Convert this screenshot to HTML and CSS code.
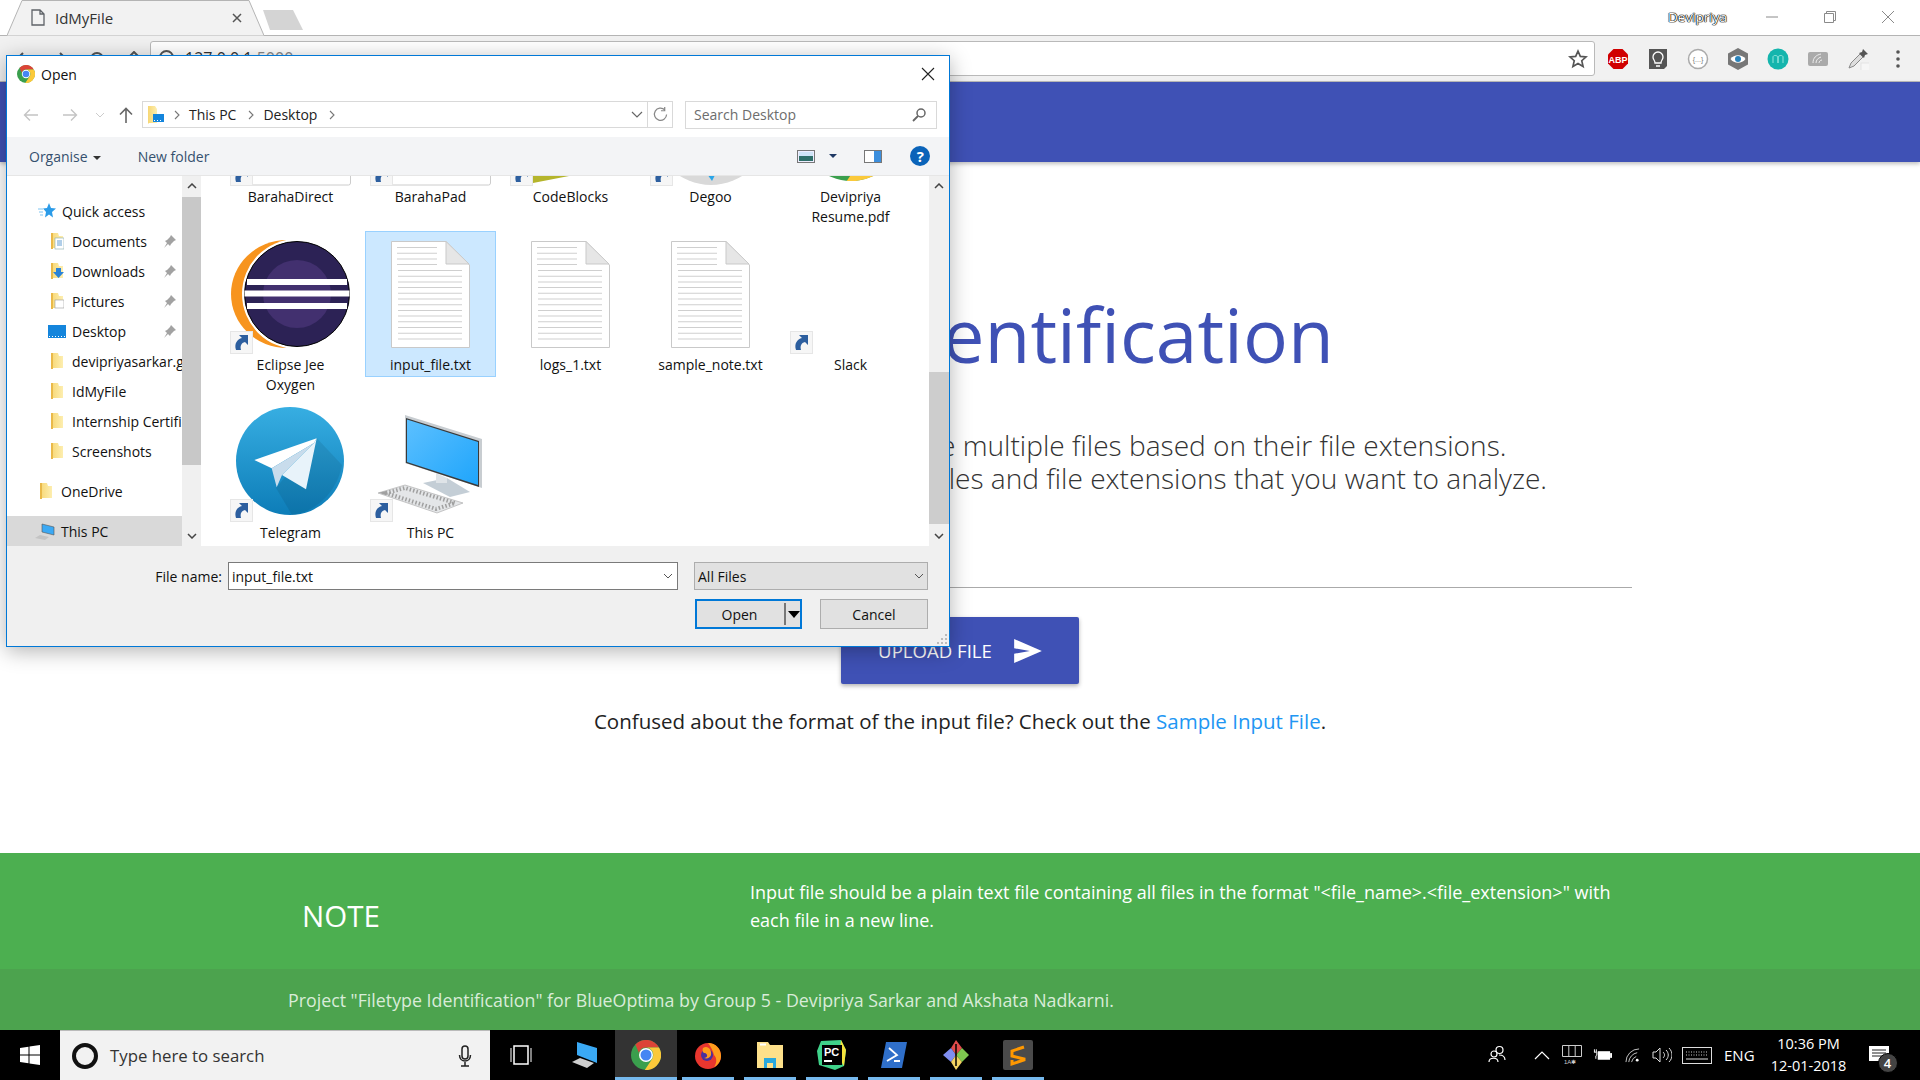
FILE: index.html
```html
<!DOCTYPE html>
<html lang="en">
<head>
<meta charset="utf-8">
<title>IdMyFile</title>
<link rel="stylesheet" href="styles.css">
</head>
<body>
<svg class="sprite" aria-hidden="true">
  <defs>
    <linearGradient id="tg" x1="0" y1="0" x2="0" y2="1"><stop offset="0" stop-color="#37aee2"/><stop offset="1" stop-color="#0d7db8"/></linearGradient>
    <linearGradient id="scr" x1="0" y1="0" x2="1" y2="1"><stop offset="0" stop-color="#5cc0ff"/><stop offset="1" stop-color="#1fa5fb"/></linearGradient>
    <linearGradient id="fold" x1="0" y1="0" x2="1" y2="0"><stop offset="0" stop-color="#f7d774"/><stop offset="1" stop-color="#fdeeb0"/></linearGradient>
    <symbol id="chrome" viewBox="0 0 24 24">
      <circle cx="12" cy="12" r="12" fill="#3a9f4d"/>
      <path d="M3.500 3.500A12 12 0 0 1 22.400 6H12A6 6 0 0 0 6.300 10.200Z" fill="#dc4437"/>
      <path d="M22.400 6A12 12 0 0 1 11 24L17 15A6 6 0 0 0 12 6Z" fill="#fbc93a"/>
      <circle cx="12" cy="12" r="5.600" fill="#fff"/><circle cx="12" cy="12" r="4.400" fill="#4586f3"/>
    </symbol>
    <symbol id="folder" viewBox="0 0 14 18">
      <path d="M1 1h7l1 3h4v12H3L1 17Z" fill="url(#fold)"/><path d="M1 1h2v16H1Z" fill="#e9b94a"/>
    </symbol>
    <symbol id="pin" viewBox="0 0 14 14">
      <path d="M8 1l5 5-2 1-3 3-1 2-2-2-4 4 3-5-2-2 2-1 3-3Z" fill="#a2a2a2"/>
    </symbol>
    <symbol id="shortcut" viewBox="0 0 23 23">
      <rect x=".5" y=".5" width="22" height="22" fill="#f6f6f6" stroke="#e6e6e6"/>
      <path d="M18 4v10l-3-3c-4 1-5 4-4 8H6C4 13 7 8 12 7L9 4Z" fill="#2d5f9f"/>
    </symbol>
    <symbol id="doc" viewBox="0 0 120 120">
      <path d="M20.500 6.500H75L98.500 30V112.500H20.500Z" fill="#fff" stroke="#c9c9c9"/>
      <path d="M75 6.500V29H98Z" fill="#e6e6e6" stroke="#c9c9c9"/>
      <line x1="46" y1="12" x2="46" y2="30" stroke="#cfcfcf" stroke-width="40" stroke-dasharray="1 4.700"/>
      <line x1="59" y1="35" x2="59" y2="108" stroke="#cfcfcf" stroke-width="64" stroke-dasharray="1 4.700"/>
    </symbol>
    <symbol id="backarrow" viewBox="0 0 16 14">
      <path d="M15 7H2M7 1.500 1.500 7 7 12.500" fill="none" stroke="currentColor" stroke-width="1.400"/>
    </symbol>
  </defs>
</svg>

<header class="tabstrip">
  <div class="tab">
    <svg class="tab-shape" viewBox="0 0 257 36" aria-hidden="true"><path d="M0 35.500 15 .5H242L257 35.500" fill="#f2f2f2" stroke="#b4b4b4"/></svg>
    <svg class="tab-fav" viewBox="0 0 14 17" aria-hidden="true"><path d="M1 1h8l4 4v11H1ZM9 1v4h4" fill="none" stroke="#5f6368" stroke-width="1.300"/></svg>
    <span class="tab-title">IdMyFile</span>
    <svg class="tab-close" viewBox="0 0 10 10" aria-hidden="true"><path d="M1 1l8 8M9 1 1 9" stroke="#555" stroke-width="1.500"/></svg>
  </div>
  <svg class="newtab" viewBox="0 0 42 22" aria-hidden="true"><path d="M1 1H31L41 21H8Z" fill="#d4d4d4"/></svg>
  <div class="profile">Devipriya</div>
  <div class="winctl">
    <svg viewBox="0 0 14 14" aria-hidden="true"><path d="M1 7h12" stroke="#8a8a8a"/></svg>
    <svg viewBox="0 0 14 14" aria-hidden="true"><path d="M3.500 3V1.500h9v9H11M1.500 3.500h9v9h-9Z" fill="none" stroke="#8a8a8a"/></svg>
    <svg viewBox="0 0 14 14" aria-hidden="true"><path d="M1 1l12 12M13 1 1 13" stroke="#8a8a8a"/></svg>
  </div>
</header>

<div class="toolbar">
  <div class="navbtns">
    <svg viewBox="0 0 16 16" aria-hidden="true"><path d="M15 8H2M8 2 2 8l6 6" fill="none" stroke="#555" stroke-width="2"/></svg>
    <svg viewBox="0 0 16 16" aria-hidden="true"><path d="M1 8h13M8 2l6 6-6 6" fill="none" stroke="#555" stroke-width="2"/></svg>
    <svg viewBox="0 0 16 16" aria-hidden="true"><circle cx="8" cy="8" r="6" fill="none" stroke="#555" stroke-width="2"/></svg>
    <svg viewBox="0 0 16 16" aria-hidden="true"><path d="M1 8l7-7 7 7" fill="none" stroke="#555" stroke-width="2"/></svg>
  </div>
  <div class="omnibox">
    <span class="url"><span class="url-ic"></span>127.0.0.1<span class="url-port">:5000</span></span>
    <svg class="star" viewBox="0 0 24 24" aria-hidden="true"><path d="M12 2.500l2.800 6.400 6.900.6-5.200 4.600 1.600 6.800-6.100-3.600-6.100 3.600 1.600-6.800L2.300 9.500l6.900-.6Z" fill="none" stroke="#555" stroke-width="2"/></svg>
  </div>
  <div class="exts">
    <svg viewBox="0 0 22 22" aria-hidden="true"><path d="M6.500 1h9L21 6.500v9L15.500 21h-9L1 15.500v-9Z" fill="#d00000"/><text x="11" y="14.500" class="abp">ABP</text></svg>
    <svg viewBox="0 0 22 22" aria-hidden="true"><path d="M2 1h18v17l-3 3H2Z" fill="#555"/><path d="M8 15c0-3-2-3-2-6a5 5 0 0 1 10 0c0 3-2 3-2 6ZM9 18h4" fill="none" stroke="#fff" stroke-width="1.300"/></svg>
    <svg viewBox="0 0 22 22" aria-hidden="true"><circle cx="11" cy="11" r="9.500" fill="#fff" stroke="#aaa" stroke-width="1.500"/><text x="11" y="14" class="dots">{...}</text></svg>
    <svg viewBox="0 0 22 22" aria-hidden="true"><path d="M11 0 21 5.500v11L11 22 1 16.500v-11Z" fill="#777"/><path d="M3.500 11C7 6 15 6 18.500 11 15 16 7 16 3.500 11Z" fill="#fff"/><circle cx="11" cy="11" r="3" fill="#2a83bb"/></svg>
    <svg viewBox="0 0 22 22" aria-hidden="true"><circle cx="11" cy="11" r="10.500" fill="#14b5ad"/><path d="M6 15V9c0-2 4-2 5 0v6-6c1-2 5-2 5 0v6" fill="none" stroke="#8fe5dc"/></svg>
    <svg viewBox="0 0 22 22" aria-hidden="true"><rect x="1" y="4" width="20" height="14" rx="2" fill="#aaa"/><path d="M6 15c0-5 3-8 8-9M9 15c0-3 2-5 5-6M12 15c0-1 1-3 3-3" fill="none" stroke="#eee"/></svg>
    <svg viewBox="0 0 22 22" aria-hidden="true"><path d="M2 20l2-5 9-9 3 3-9 9Z" fill="#ddd" stroke="#888"/><path d="M12 5l3-1 1-3 5 5-3 1-1 3Z" fill="#555"/><rect x="14" y="15" width="12" height="12" fill="#f6f6f6" stroke="#e4e4e4"/></svg>
    <svg class="ext-menu" viewBox="0 0 4 18" aria-hidden="true"><circle cx="2" cy="2" r="1.800" fill="#555"/><circle cx="2" cy="9" r="1.800" fill="#555"/><circle cx="2" cy="16" r="1.800" fill="#555"/></svg>
  </div>
</div>

<main class="page">
  <div class="appbar"></div>
  <section class="hero">
    <h1 class="title">Filetype Identification</h1>
    <p class="lead">Upload one text file of filenames to analyze multiple files based on their file extensions.<br>Provide an input file listing out the names of files and file extensions that you want to analyze.</p>
    <hr class="rule">
    <button class="upload" type="button">UPLOAD FILE
      <svg viewBox="0 0 30 26" aria-hidden="true"><path d="M0 0 30 13 0 26V16L17 13 0 10Z" fill="#fff"/></svg>
    </button>
    <p class="help">Confused about the format of the input file? Check out the <a class="link" href="#">Sample Input File</a>.</p>
  </section>
  <section class="note">
    <h2 class="note-h">NOTE</h2>
    <p class="note-t">Input file should be a plain text file containing all files in the format "&lt;file_name&gt;.&lt;file_extension&gt;" with each file in a new line.</p>
  </section>
  <footer class="foot">Project "Filetype Identification" for BlueOptima by Group 5 - Devipriya Sarkar and Akshata Nadkarni.</footer>
</main>

<nav class="taskbar">
  <div class="start"><svg viewBox="0 0 20 20" aria-hidden="true"><path d="M0 3l8.500-1.200V9.500H0ZM9.500 1.600 20 0v9.500H9.500ZM0 10.500h8.500v7.700L0 17ZM9.500 10.500H20V20L9.500 18.400Z" fill="#fff"/></svg></div>
  <div class="search">
    <span class="cortana"></span>
    <span class="search-t">Type here to search</span>
    <svg class="mic" viewBox="0 0 14 22" aria-hidden="true"><rect x="4" y="1" width="6" height="13" rx="3" fill="none" stroke="#222" stroke-width="1.500"/><path d="M1.500 10c0 8 11 8 11 0M7 17v4M3 21h8" fill="none" stroke="#222" stroke-width="1.500"/></svg>
  </div>
  <div class="apps">
    <div class="app"><svg viewBox="1 0 30 30" aria-hidden="true"><rect x="8" y="6" width="14" height="18" fill="none" stroke="#fff" stroke-width="1.500"/><path d="M5 8v14M25 8v14" stroke="#fff"/></svg></div>
    <div class="app"><svg viewBox="0 0 30 30" aria-hidden="true"><path d="M8 2 28 8v15L8 15Z" fill="#3aa9f4"/><path d="M3 22l8-4 14 5-7 5Z" fill="#cfcfcf"/></svg></div>
    <div class="app active on"><svg viewBox="0 0 24 24" aria-hidden="true"><use href="#chrome"/></svg></div>
    <div class="app on"><svg viewBox="0 0 30 30" aria-hidden="true"><circle cx="15" cy="16" r="13" fill="#e8362e"/><path d="M15 3c8 0 13 6 13 13 0 5-3 9-7 11 3-4 3-9 0-12-1-4-3-8-6-12Z" fill="#ff9d1c"/><circle cx="14" cy="15" r="6" fill="#4a2f9c"/><path d="M10 8c5-3 9 2 8 7-1 3-4 4-7 3 4 0 4-4 1-5-2 0-3-2-2-5Z" fill="#ff9d1c"/></svg></div>
    <div class="app on"><svg viewBox="0 0 30 30" aria-hidden="true"><path d="M2 2h11l2 3h13v23H2Z" fill="#fde08a"/><rect x="5" y="3.500" width="6" height="2" fill="#fff"/><path d="M9 18h12v10h-3v-5h-6v5H9Z" fill="#29a8dd"/></svg></div>
    <div class="app on"><svg viewBox="0 0 30 30" aria-hidden="true"><path d="M4 1 24 0l5 10-2 16-9 4L2 25 0 11Z" fill="#3fd28a"/><path d="M24 0l5 10-2 16-5-8Z" fill="#f6e23b"/><rect x="5" y="5" width="20" height="20" fill="#000"/><text x="7" y="16" class="pc">PC</text><rect x="7" y="20" width="8" height="2" fill="#fff"/></svg></div>
    <div class="app on"><svg viewBox="0 0 30 30" aria-hidden="true"><path d="M7 2h21l-5 26H2Z" fill="#2f6fc9"/><path d="M10 8l8 7-10 6M15 21h6" fill="none" stroke="#fff" stroke-width="1.800"/></svg></div>
    <div class="app on"><svg viewBox="0 0 30 30" aria-hidden="true"><path d="M15 0l6 8-6 7-5-7Z" fill="#e24b4b"/><path d="M2 15l8-7 5 7-5 7Z" fill="#7f8ef0"/><path d="M28 15l-7-7-6 7 6 7Z" fill="#7ec850"/><path d="M15 30l-5-8 5-7 6 7Z" fill="#f3d362"/><path d="M15 4v22" stroke="#000" stroke-width="1.500"/></svg></div>
    <div class="app on"><svg viewBox="0 0 30 30" aria-hidden="true"><rect width="30" height="30" rx="2" fill="#4a4a4a"/><path d="M21 7 9 11v5l12 3v1L9 24v-4" fill="none" stroke="#ff9800" stroke-width="3"/></svg></div>
  </div>
  <div class="tray">
    <svg class="t-people" viewBox="0 0 18 20" aria-hidden="true"><circle cx="11.500" cy="5" r="3.500" fill="none" stroke="#fff" stroke-width="1.200"/><circle cx="6" cy="9" r="3" fill="none" stroke="#fff" stroke-width="1.200"/><path d="M1 17c0-5 9-5 9 0M11 10c3 0 6 1 6 5" fill="none" stroke="#fff" stroke-width="1.200"/></svg>
    <svg class="t-chev" viewBox="0 0 16 9" aria-hidden="true"><path d="M1 8l7-7 7 7" fill="none" stroke="#fff" stroke-width="1.200"/></svg>
    <svg class="t-lay" viewBox="0 0 20 20" aria-hidden="true"><path d="M.5.500h19v11H.5ZM6.800.500v11M13.200.500v11" fill="none" stroke="#ccc"/><text x="2" y="19" class="lay">1A✱</text></svg>
    <svg class="t-batt" viewBox="0 0 20 14" aria-hidden="true"><rect x="5" y="3" width="13" height="9" fill="#fff"/><rect x="18" y="5" width="2" height="5" fill="#fff"/><path d="M1.500 1v3M3.500 1v3M1 4h3v2c0 2-1 2-1 2v3" fill="none" stroke="#fff"/></svg>
    <svg class="t-wifi" viewBox="0 0 16 16" aria-hidden="true"><circle cx="13" cy="13" r="1.500" fill="#fff"/><path d="M1 15A14 14 0 0 1 15 1M4 15A11 11 0 0 1 13 5M7 15a8 8 0 0 1 5-6" fill="none" stroke="#ccc"/></svg>
    <svg class="t-vol" viewBox="0 0 20 16" aria-hidden="true"><path d="M1 5h3l4-4v14l-4-4H1ZM11 5c2 2 2 4 0 6M14 3c3 3 3 7 0 10M17 1c4 4 4 10 0 14" fill="none" stroke="#ddd"/></svg>
    <svg class="t-kb" viewBox="0 0 30 17" aria-hidden="true"><rect x=".5" y=".5" width="29" height="16" fill="none" stroke="#ddd"/><path d="M4 5h22M4 8h22" stroke="#ccc" stroke-dasharray="1 1.500"/><path d="M4 12h22" stroke="#ddd"/></svg>
    <span class="t-eng">ENG</span>
    <div class="t-clock"><span>10:36 PM</span><span>12-01-2018</span></div>
    <div class="t-notif">
      <svg viewBox="0 0 20 18" aria-hidden="true"><path d="M0 0h20v15H0Z" fill="#fff"/><path d="M3 4h14M3 7h14M3 10h14" stroke="#222"/></svg>
      <span class="badge">4</span>
    </div>
  </div>
</nav>

<div class="dialog">
  <div class="d-title">
    <svg class="d-chrome" aria-hidden="true"><use href="#chrome"/></svg>
    <span>Open</span>
    <svg class="d-x" viewBox="0 0 14 14" aria-hidden="true"><path d="M1 1l12 12M13 1 1 13" stroke="#222" stroke-width="1.100"/></svg>
  </div>
  <div class="d-nav">
    <svg class="nv nv1" viewBox="0 0 16 14" aria-hidden="true"><use href="#backarrow"/></svg>
    <svg class="nv nv2" viewBox="0 0 16 14" aria-hidden="true"><g transform="matrix(-1 0 0 1 16 0)"><use href="#backarrow"/></g></svg>
    <svg class="nv3" viewBox="0 0 10 6" aria-hidden="true"><path d="M1 1l4 4 4-4" fill="none" stroke="#ccc"/></svg>
    <svg class="nv4" viewBox="0 0 14 16" aria-hidden="true"><path d="M7 16V2M1 7.500 7 1.500l6 6" fill="none" stroke="#666" stroke-width="1.600"/></svg>
    <div class="addr">
      <svg class="addr-ic" viewBox="0 0 16 18" aria-hidden="true"><path d="M0 0h7l2 3v14H1L0 18Z" fill="url(#fold)"/><rect x="5" y="8" width="11" height="8" fill="#1485dc"/><path d="M6 14.500h9" stroke="#fff" stroke-dasharray="1 2"/></svg>
      <svg class="crumb" viewBox="0 0 6 10" aria-hidden="true"><path d="M1 1l4 4-4 4" fill="none" stroke="#777" stroke-width="1.100"/></svg>
      <span class="crumb-t">This PC</span>
      <svg class="crumb crumb2" viewBox="0 0 6 10" aria-hidden="true"><path d="M1 1l4 4-4 4" fill="none" stroke="#777" stroke-width="1.100"/></svg>
      <span class="crumb-t">Desktop</span>
      <svg class="crumb crumb2" viewBox="0 0 6 10" aria-hidden="true"><path d="M1 1l4 4-4 4" fill="none" stroke="#777" stroke-width="1.100"/></svg>
      <svg class="addr-drop" viewBox="0 0 12 7" aria-hidden="true"><path d="M1 1l5 5 5-5" fill="none" stroke="#666" stroke-width="1.200"/></svg>
      <span class="addr-ref"><svg viewBox="0 0 16 16" aria-hidden="true"><path d="M12.500 3A6.500 6.500 0 1 0 14.500 8M12.500 0v4h-4" fill="none" stroke="#888" stroke-width="1.300"/></svg></span>
    </div>
    <div class="dsearch">
      <span>Search Desktop</span>
      <svg viewBox="0 0 14 14" aria-hidden="true"><circle cx="9" cy="5" r="4" fill="none" stroke="#666" stroke-width="1.500"/><path d="M6 8l-5 5" stroke="#666" stroke-width="1.800"/></svg>
    </div>
  </div>
  <div class="d-tools">
    <span class="tool">Organise<i class="caret"></i></span>
    <span class="tool tool2">New folder</span>
    <svg class="view-ic" viewBox="0 0 18 13" aria-hidden="true"><rect x=".5" y=".5" width="17" height="12" fill="#eef" stroke="#777"/><rect x="2" y="2" width="14" height="4" fill="#cfe4f7"/><rect x="2" y="6" width="14" height="5" fill="#2f6f6a"/></svg>
    <i class="caret caret-d"></i>
    <svg class="pane-ic" viewBox="0 0 18 13" aria-hidden="true"><rect x=".5" y=".5" width="17" height="12" fill="#fff" stroke="#777"/><rect x="10" y="1" width="7" height="11" fill="#3d8fdd"/></svg>
    <span class="help-ic">?</span>
  </div>
  <div class="d-body">
    <div class="side">
      <ul class="tree">
        <li class="node n1"><svg class="n-ic star-ic" viewBox="0 0 18 18" aria-hidden="true"><path d="M11 1l2 5 5 .5-4 3.500 1 5.500-4-3-4 3 1-5.500-3-3.500 4-.5Z" fill="#2b9be8"/><path d="M0 7h5M1 10h4M2 13h3" stroke="#7cc4f2"/></svg><span>Quick access</span></li>
        <li class="node n2"><svg class="n-ic" viewBox="0 0 14 18" aria-hidden="true"><use href="#folder"/><rect x="5" y="6" width="9" height="11" fill="#fff" stroke="#8aa" stroke-width=".6"/><path d="M7 9h5M7 11h5M7 13h5" stroke="#3a86c8" stroke-width=".8"/></svg><span>Documents</span><svg class="pin" aria-hidden="true"><use href="#pin"/></svg></li>
        <li class="node n2"><svg class="n-ic" viewBox="0 0 14 18" aria-hidden="true"><use href="#folder"/><path d="M6 6h5v4h3l-5.500 6L3 10h3Z" fill="#2b83d8"/></svg><span>Downloads</span><svg class="pin" aria-hidden="true"><use href="#pin"/></svg></li>
        <li class="node n2"><svg class="n-ic" viewBox="0 0 14 18" aria-hidden="true"><use href="#folder"/><rect x="5" y="8" width="9" height="8" fill="#fff" stroke="#999" stroke-width=".6"/></svg><span>Pictures</span><svg class="pin" aria-hidden="true"><use href="#pin"/></svg></li>
        <li class="node n2"><svg class="n-ic desk-ic" viewBox="0 0 18 13" aria-hidden="true"><rect width="18" height="13" fill="#1485dc"/><path d="M1 11.500h16" stroke="#fff" stroke-dasharray="1 2"/></svg><span>Desktop</span><svg class="pin" aria-hidden="true"><use href="#pin"/></svg></li>
        <li class="node n2"><svg class="n-ic" viewBox="0 0 14 18" aria-hidden="true"><use href="#folder"/></svg><span>devipriyasarkar.github.io</span></li>
        <li class="node n2"><svg class="n-ic" viewBox="0 0 14 18" aria-hidden="true"><use href="#folder"/></svg><span>IdMyFile</span></li>
        <li class="node n2"><svg class="n-ic" viewBox="0 0 14 18" aria-hidden="true"><use href="#folder"/></svg><span>Internship Certificates</span></li>
        <li class="node n2"><svg class="n-ic" viewBox="0 0 14 18" aria-hidden="true"><use href="#folder"/></svg><span>Screenshots</span></li>
        <li class="node n1 gap"><svg class="n-ic" viewBox="0 0 14 18" aria-hidden="true"><use href="#folder"/></svg><span>OneDrive</span></li>
        <li class="node n1 gap sel"><svg class="n-ic pc-ic" viewBox="0 0 20 17" aria-hidden="true"><path d="M7 1l12 3v8L7 9Z" fill="#3ba9f4" stroke="#555" stroke-width=".6"/><path d="M0 15l5-3 9 2-4 3Z" fill="#c4c4c4"/></svg><span>This PC</span></li>
      </ul>
      <div class="sbar">
        <svg class="arr" viewBox="0 0 10 6" aria-hidden="true"><path d="M1 5l4-4 4 4" fill="none" stroke="#444" stroke-width="1.500"/></svg>
        <div class="thumb thumb-s"></div>
        <svg class="arr arr-d" viewBox="0 0 10 6" aria-hidden="true"><path d="M1 1l4 4 4-4" fill="none" stroke="#444" stroke-width="1.500"/></svg>
      </div>
    </div>
    <div class="files">
      <div class="grid">
        <div class="cell"><div class="icon"><svg viewBox="0 0 120 120" aria-hidden="true"><rect x=".5" y="-20" width="119" height="138" rx="2" fill="#fff" stroke="#ccc"/></svg><svg class="sc" aria-hidden="true"><use href="#shortcut"/></svg></div><div class="label">BarahaDirect</div></div>
        <div class="cell"><div class="icon"><svg viewBox="0 0 120 120" aria-hidden="true"><rect x=".5" y="-20" width="119" height="138" rx="2" fill="#fff" stroke="#ccc"/></svg><svg class="sc" aria-hidden="true"><use href="#shortcut"/></svg></div><div class="label">BarahaPad</div></div>
        <div class="cell"><div class="icon"><svg viewBox="0 0 120 120" aria-hidden="true"><path d="M22 90H85L58 109 22 116Z" fill="#b5b52c"/></svg><svg class="sc" aria-hidden="true"><use href="#shortcut"/></svg></div><div class="label">CodeBlocks</div></div>
        <div class="cell"><div class="icon"><svg viewBox="0 0 120 120" aria-hidden="true"><circle cx="60" cy="60" r="58" fill="#d9d9d9"/><path d="M54 104h12l-5 10Z" fill="#2aa5e8"/></svg><svg class="sc" aria-hidden="true"><use href="#shortcut"/></svg></div><div class="label">Degoo</div></div>
        <div class="cell"><div class="icon"><svg viewBox="0 0 120 120" aria-hidden="true"><use href="#chrome" x="9" y="12" width="102" height="102"/></svg></div><div class="label">Devipriya Resume.pdf</div></div>

        <div class="cell"><div class="icon"><svg viewBox="0 0 120 120" aria-hidden="true"><path d="M56 5A56 54 0 0 0 56 113Z" fill="#f7941e"/><circle cx="66" cy="59" r="55" fill="#fff"/><circle cx="66" cy="59" r="52.500" fill="#2c2255" stroke="#000"/><circle cx="66" cy="59" r="34" fill="#42306f"/><path d="M16 44h100v6H16ZM13.500 55.500h105v6h-105ZM16 68h100v6H16Z" fill="#fff"/></svg><svg class="sc" aria-hidden="true"><use href="#shortcut"/></svg></div><div class="label">Eclipse Jee Oxygen</div></div>
        <div class="cell cell-sel"><div class="icon"><svg viewBox="0 0 120 120" aria-hidden="true"><use href="#doc"/></svg></div><div class="label">input_file.txt</div></div>
        <div class="cell"><div class="icon"><svg viewBox="0 0 120 120" aria-hidden="true"><use href="#doc"/></svg></div><div class="label">logs_1.txt</div></div>
        <div class="cell"><div class="icon"><svg viewBox="0 0 120 120" aria-hidden="true"><use href="#doc"/></svg></div><div class="label">sample_note.txt</div></div>
        <div class="cell"><div class="icon"><svg class="sc" aria-hidden="true"><use href="#shortcut"/></svg></div><div class="label">Slack</div></div>

        <div class="cell"><div class="icon"><svg viewBox="0 0 120 120" aria-hidden="true"><circle cx="59" cy="58" r="54" fill="url(#tg)"/><path d="M85.700 35 111 62C107 85 89 108 61 112L45 85Z" fill="#000" opacity=".08"/><path d="M85.700 35.300 23.300 57 40.700 65.300 83 40Z" fill="#fff"/><path d="M40.700 65.300 45.700 84.300 51 72 83 40Z" fill="#c8dcec"/><path d="M83 40 85.700 35.300 75 86.300 51 72Z" fill="#e8f3fa"/></svg><svg class="sc" aria-hidden="true"><use href="#shortcut"/></svg></div><div class="label">Telegram</div></div>
        <div class="cell"><div class="icon"><svg viewBox="1 0 120 120" aria-hidden="true"><path d="M53 80 77 75 100 89 80 94Z" fill="#c4ced6"/><path d="M66 70v10h11V75Z" fill="#dfe4e8"/><path d="M35 12 112 36V85L35 60Z" fill="#c8cdd1"/><path d="M36 15 109 38V84L36 60Z" fill="#3a3a3a"/><path d="M37 16.500 108 39V82L37 59Z" fill="url(#scr)"/><path d="M8 90 35 82 93 100 67 110Z" fill="#e4e6e8" stroke="#a5a5a5" stroke-width=".6"/><path d="M16 90 35 85 85 100 66 106Z" fill="none" stroke="#a0a0a0" stroke-dasharray="1.500 2" stroke-width="4"/></svg><svg class="sc" aria-hidden="true"><use href="#shortcut"/></svg></div><div class="label">This PC</div></div>
      </div>
    </div>
    <div class="sbar sbar-m">
      <svg class="arr" viewBox="0 0 10 6" aria-hidden="true"><path d="M1 5l4-4 4 4" fill="none" stroke="#444" stroke-width="1.500"/></svg>
      <div class="thumb thumb-m"></div>
      <svg class="arr arr-d" viewBox="0 0 10 6" aria-hidden="true"><path d="M1 1l4 4 4-4" fill="none" stroke="#444" stroke-width="1.500"/></svg>
    </div>
  </div>
  <div class="d-foot">
    <div class="f-row">
      <span class="f-label">File name:</span>
      <div class="f-input"><span>input_file.txt</span><svg viewBox="0 0 10 6" aria-hidden="true"><path d="M1 1l4 4 4-4" fill="none" stroke="#555"/></svg></div>
      <div class="f-type"><span>All Files</span><svg viewBox="0 0 10 6" aria-hidden="true"><path d="M1 1l4 4 4-4" fill="none" stroke="#555"/></svg></div>
    </div>
    <div class="b-row">
      <div class="btn btn-open"><span class="open-t">Open</span><span class="open-sep"></span><i class="open-car"></i></div>
      <div class="btn btn-cancel">Cancel</div>
    </div>
    <svg class="grip" viewBox="0 0 12 12" aria-hidden="true"><path d="M9 1h2v2H9ZM5 5h2v2H5ZM9 5h2v2H9ZM1 9h2v2H1ZM5 9h2v2H5ZM9 9h2v2H9Z" fill="#bbb"/></svg>
  </div>
</div>
</body>
</html>
```
FILE: styles.css
```css
* { box-sizing: border-box; }
html, body { margin: 0; padding: 0; }
body {
  position: relative;
  width: 1920px;
  height: 1080px;
  overflow: hidden;
  display: flex;
  flex-direction: column;
  font-family: "Open Sans", "Noto Sans", sans-serif;
  color: #222;
  background: #fff;
}
svg { display: block; }
.sprite { position: absolute; width: 0; height: 0; }

/* tab strip */
.tabstrip { height: 36px; flex: none; display: flex; align-items: flex-start; padding-left: 7px; background: #fff; border-bottom: 1px solid #b4b4b4; }
.tab { position: relative; width: 257px; height: 36px; display: flex; align-items: center; }
.tab-shape { position: absolute; inset: 0; width: 257px; height: 36px; }
.tab-fav { position: relative; width: 14px; height: 17px; margin: -1px 0 0 24px; }
.tab-title { position: relative; margin: 0 0 0 10px; font-size: 15px; color: #333; }
.tab-close { position: relative; width: 10px; height: 10px; margin-left: auto; margin-right: 22px; }
.newtab { width: 42px; height: 22px; margin: 9px 0 0 -2px; }
.profile { margin: 8px 2px 0 auto; font-size: 13.500px; color: #fff; text-shadow: 0 0 1px #000, 0 0 1px #000, 0 0 1px #000, 0 0 1px #000; }
.winctl { display: flex; gap: 44px; margin: 10px 25px 0 36px; }
.winctl svg { width: 14px; height: 14px; }

/* toolbar */
.toolbar { height: 46px; flex: none; display: flex; align-items: center; padding-left: 15px; background: #f1f1f1; border-bottom: 1px solid #bbb; }
.navbtns { display: flex; gap: 21px; width: 135px; }
.navbtns svg { width: 16px; height: 16px; }
.omnibox { width: 1445px; height: 35px; display: flex; align-items: center; background: #fff; border: 1px solid #b9b9b9; border-radius: 3px; padding: 0 6px 0 8px; }
.url { font-size: 16px; display: flex; align-items: center; margin-top: -2px; color: #333; }
.url-ic { width: 15px; height: 15px; border: 2px solid #555; border-radius: 50%; margin-right: 11px; }
.url-port { color: #888; }
.star { width: 20px; height: 20px; margin-left: auto; }
.exts { display: flex; align-items: center; gap: 18px; margin-left: 12px; }
.exts svg { width: 22px; height: 22px; overflow: hidden; }
.exts .ext-menu { width: 4px; height: 18px; margin-left: 9px; }
.abp { font: 700 9px "Liberation Sans", sans-serif; fill: #fff; text-anchor: middle; }
.dots { font: 7px "Liberation Sans", sans-serif; fill: #777; text-anchor: middle; }
.pc { font: 700 11px "Liberation Sans", sans-serif; fill: #fff; }
.lay { font: 6px "Liberation Sans", sans-serif; fill: #ccc; }

/* page */
.page { flex: 1; min-height: 0; display: flex; flex-direction: column; background: #fff; }
.appbar { position: relative; height: 80px; flex: none; background: #3f51b5; box-shadow: 0 2px 4px rgba(0,0,0,.25); }
.hero { flex: 1; display: flex; flex-direction: column; align-items: center; }
.title { margin: 122px 0 0; font-size: 74.800px; line-height: 100px; font-weight: 400; color: #3f51b5; white-space: nowrap; }
.lead { margin: 45px 0 0; font-size: 28.100px; line-height: 33px; font-weight: 300; text-align: center; color: #333; white-space: nowrap; }
.rule { width: 682px; margin: 92px 0 0 950px; align-self: flex-start; border: 0; border-top: 1px solid #aaa; }
.upload { width: 238px; height: 67px; margin-top: 29px; display: flex; align-items: center; justify-content: center; gap: 22px; font: 18.600px "Open Sans", sans-serif; color: #fff; background: #3f51b5; border: 0; border-radius: 2px; box-shadow: 0 2px 4px rgba(0,0,0,.3); }
.upload svg { width: 28px; height: 24px; }
.help { margin: 21.500px 0 0; font-size: 20.500px; line-height: 30px; color: #222; }
.link { color: #2196f3; text-decoration: none; }
.note { height: 116px; flex: none; display: flex; background: #4caf50; color: #fff; }
.note-h { width: 750px; margin: 0; padding: 42px 0 0 302px; font-size: 29.500px; line-height: 42px; font-weight: 400; }
.note-t { width: 880px; margin: 0; padding-top: 25px; font-size: 18px; line-height: 28px; }
.foot { height: 61px; flex: none; padding: 17px 0 0 288px; font-size: 17.800px; line-height: 28px; background: #4ca34e; color: #d9ecd9; }

/* taskbar */
.taskbar { height: 50px; flex: none; display: flex; background: #000; color: #fff; }
.start { width: 60px; display: flex; align-items: center; justify-content: center; }
.start svg { width: 20px; height: 20px; }
.search { width: 430px; display: flex; align-items: center; background: #f2f2f2; border-top: 1px solid #bbb; padding: 0 18px 0 12px; color: #333; }
.cortana { width: 26px; height: 26px; border: 4px solid #111; border-radius: 50%; }
.search-t { margin-left: 12px; font-size: 16.800px; }
.mic { width: 14px; height: 22px; margin-left: auto; }
.apps { display: flex; margin-left: 1px; }
.app { position: relative; width: 62px; display: flex; align-items: center; justify-content: center; }
.app svg { width: 30px; height: 30px; }
.active { background: #333; }
.on::after { content: ""; position: absolute; left: 5px; right: 5px; bottom: 0; height: 3px; background: #76b9ed; }
.active.on::after { left: 0; right: 0; }
.tray { display: flex; align-items: center; margin-left: 439px; font-size: 15px; }
.t-people { width: 18px; height: 20px; }
.t-chev { width: 16px; height: 9px; margin-left: 28px; }
.t-lay { width: 20px; height: 20px; margin-left: 12px; }
.t-batt { width: 19px; height: 14px; margin-left: 11px; }
.t-wifi { width: 15px; height: 15px; margin-left: 13px; }
.t-vol { width: 20px; height: 16px; margin-left: 12px; }
.t-kb { width: 30px; height: 17px; margin-left: 10px; }
.t-eng { margin-left: 12px; font-size: 15px; }
.t-clock { display: flex; flex-direction: column; align-items: center; margin-left: 15px; font-size: 14.500px; line-height: 22px; width: 78px; }
.t-notif { position: relative; margin-left: 21px; }
.t-notif svg { width: 20px; height: 18px; }
.badge { position: absolute; left: 9px; top: 7px; width: 20px; height: 20px; border-radius: 50%; background: #444; border: 1px solid #000; font-size: 13px; font-weight: 600; line-height: 18px; text-align: center; }

/* dialog window */
.dialog { position: absolute; left: 6px; top: 55px; width: 944px; height: 592px; display: flex; flex-direction: column; background: #fff; border: 1px solid #0078d7; box-shadow: 0 4px 20px rgba(0,0,0,.3); font-size: 14px; color: #111; }
.d-title { height: 36px; flex: none; display: flex; align-items: center; padding: 0 14px 0 10px; }
.d-chrome { width: 18px; height: 18px; margin-right: 6px; }
.d-x { width: 14px; height: 14px; margin-left: auto; }
.d-nav { height: 45px; flex: none; display: flex; align-items: center; }
.nv { width: 16px; height: 14px; color: #c4c4c4; }
.nv1 { margin-left: 16px; }
.nv2 { margin-left: 23px; }
.nv3 { width: 10px; height: 6px; margin-left: 17px; }
.nv4 { width: 14px; height: 16px; margin-left: 14px; }
.addr { width: 531px; height: 27px; display: flex; align-items: center; margin-left: 9px; border: 1px solid #d9d9d9; padding-left: 5px; }
.addr-ic { width: 16px; height: 18px; }
.crumb { width: 6px; height: 10px; margin: 0 9px 0 10px; }
.crumb2 { margin: 0 9px 0 12px; }
.crumb-t { color: #222; }
.addr-drop { width: 12px; height: 7px; margin-left: auto; margin-right: 4px; }
.addr-ref { width: 25px; height: 100%; display: flex; align-items: center; justify-content: center; border-left: 1px solid #d9d9d9; }
.addr-ref svg { width: 15px; height: 15px; }
.dsearch { width: 252px; height: 28px; display: flex; align-items: center; justify-content: space-between; margin-left: 12px; border: 1px solid #d9d9d9; padding: 0 10px 0 8px; color: #6d6d6d; }
.dsearch svg { width: 14px; height: 14px; }
.d-tools { height: 39px; flex: none; display: flex; align-items: center; background: #f3f4f6; border-bottom: 1px solid #e6e6e6; padding-left: 22px; color: #35506e; }
.tool2 { margin-left: 37px; }
.caret { display: inline-block; vertical-align: middle; margin-left: 5px; border: 4px solid transparent; border-top-color: #333; border-bottom: 0; }
.view-ic { width: 18px; height: 13px; margin-left: 588px; }
.caret-d { margin-left: 14px; border-top-color: #1f3864; }
.pane-ic { width: 18px; height: 13px; margin-left: 27px; }
.help-ic { width: 20px; height: 20px; margin-left: 28px; border-radius: 50%; background: #0a63b9; color: #fff; font-size: 15px; font-weight: 700; line-height: 20px; text-align: center; }
.d-body { height: 370px; flex: none; display: flex; overflow: hidden; }
.side { width: 197px; flex: none; display: flex; padding-right: 3px; }
.tree { list-style: none; margin: 0; padding: 20px 0 0; width: 175px; flex: none; overflow: hidden; }
.node { position: relative; height: 30px; display: flex; align-items: center; white-space: nowrap; overflow: hidden; }
.n1 { padding-left: 32px; }
.n2 { padding-left: 43px; }
.gap { margin-top: 10px; }
.sel { background: #d9d9d9; }
.n-ic { width: 14px; height: 18px; margin-right: 8px; flex: none; }
.star-ic { width: 18px; margin-left: -1px; margin-right: 6px; }
.desk-ic { width: 18px; height: 13px; margin-left: -2px; margin-right: 6px; }
.pc-ic { width: 20px; height: 17px; margin-left: -4px; margin-right: 6px; }
.pin { position: absolute; left: 156px; top: 8px; width: 14px; height: 14px; }
.sbar { width: 19px; flex: none; position: relative; display: flex; flex-direction: column; align-items: center; background: #f0f0f0; }
.arr { width: 10px; height: 6px; margin-top: 7px; flex: none; }
.arr-d { margin-top: auto; margin-bottom: 7px; }
.thumb { width: 100%; background: #c8c8c8; flex: none; }
.thumb-s { height: 268px; margin-top: 8px; }
.sbar-m { width: 20px; }
.thumb-m { height: 152px; margin-top: 183px; background: #cdcdcd; }
.files { flex: 1; min-width: 0; overflow: hidden; padding-left: 16px; }
.grid { display: grid; grid-template-columns: repeat(5, 131px); column-gap: 9px; grid-auto-rows: 146px; row-gap: 22px; margin-top: -113px; margin-left: 5px; }
.cell { display: flex; flex-direction: column; align-items: center; border: 1px solid transparent; padding-top: 3px; }
.cell-sel { background: #cce8ff; border-color: #99d1ff; }
.icon { position: relative; width: 120px; height: 120px; flex: none; }
.icon > svg:first-child:not(.sc) { width: 120px; height: 120px; overflow: visible; }
.icon .sc { position: absolute; left: -1px; top: 96px; width: 23px; height: 23px; }
.label { width: 120px; text-align: center; line-height: 20px; font-size: 14px; }
.d-foot { position: relative; flex: 1; background: #f0f0f0; padding-top: 16px; }
.f-row { display: flex; align-items: center; height: 28px; }
.f-label { width: 221px; text-align: right; padding-right: 6px; }
.f-input { width: 450px; height: 28px; display: flex; align-items: center; justify-content: space-between; background: #fff; border: 1px solid #7a7a7a; padding: 0 4px 0 3px; }
.f-input svg, .f-type svg { width: 10px; height: 6px; }
.f-type { width: 234px; height: 28px; display: flex; align-items: center; justify-content: space-between; margin-left: 16px; background: #e1e1e1; border: 1px solid #adadad; padding: 0 3px; }
.b-row { display: flex; gap: 18px; margin: 9px 0 0 688px; }
.btn { height: 30px; display: flex; align-items: center; justify-content: center; background: #e1e1e1; border: 1px solid #adadad; }
.btn-open { position: relative; width: 107px; border: 2px solid #0078d7; justify-content: flex-start; }
.open-t { width: 87px; padding-right: 2px; text-align: center; }
.open-sep { width: 2px; height: 22px; background: #777; }
.open-car { margin-left: 2px; border: 6px solid transparent; border-top: 7px solid #000; border-bottom: 0; }
.btn-cancel { width: 108px; }
.grip { position: absolute; right: 1px; bottom: 1px; width: 12px; height: 12px; }
```
